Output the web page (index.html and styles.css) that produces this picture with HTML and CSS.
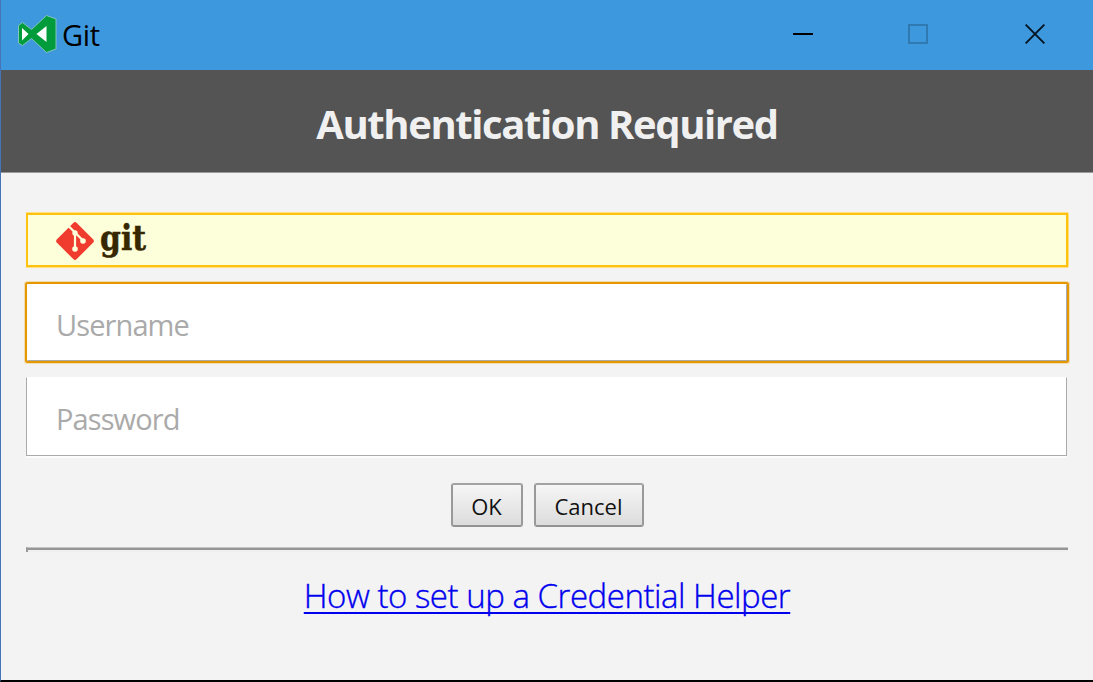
FILE: index.html
```html
<!DOCTYPE html>
<html lang="en">
<head>
<meta charset="utf-8">
<title>Git</title>
<link rel="stylesheet" href="styles.css">
</head>
<body>
<div class="window">
  <header class="titlebar">
    <svg class="app-icon" viewBox="0 0 40 40">
      <path d="M1.500 10.500L5.500 7.500L14.500 14.500L29.500 .5L39 4V34L29.500 37.500L14.500 23.500L5.500 30.500L1.500 28Z" fill="#009c3b" stroke="#82c3bd" stroke-width="1"/>
      <path d="M5 13V25.500L11.500 19ZM19.500 19L29.500 11V27Z" fill="#fff"/>
    </svg>
    <span class="app-name">Git</span>
    <div class="controls">
      <svg class="control" viewBox="0 0 20 20"><path d="M0 10H20" stroke="#000" stroke-width="2"/></svg>
      <svg class="control" viewBox="0 0 20 20"><rect x="1" y="1" width="18" height="18" fill="none" stroke="#317ab1" stroke-width="2"/></svg>
      <svg class="control close" viewBox="0 0 20 20"><path d="M.6 .6L19.400 19.400M19.400 .6L.6 19.400" stroke="#061320" stroke-width="1.900"/></svg>
    </div>
  </header>
  <div class="banner"><h1 class="heading">Authentication Required</h1></div>
  <main class="content">
    <div class="brand">
      <svg class="brand-mark" viewBox="0 0 38 38">
        <rect x="5" y="5" width="28" height="28" rx="2.500" transform="rotate(45 19 19)" fill="#f03c2e"/>
        <g fill="none" stroke="#fdffda" stroke-width="2.200"><path d="M12 3.500L19 10.500L27 18.500M19 10.500V27"/></g>
        <g fill="#fdffda"><circle cx="19" cy="11" r="2.700"/><circle cx="27" cy="19" r="2.800"/><circle cx="19" cy="27" r="2.800"/></g>
      </svg>
      <span class="brand-name">git</span>
    </div>
    <input class="field focused" type="text" placeholder="Username">
    <input class="field" type="password" placeholder="Password">
    <div class="actions">
      <button class="button ok" type="button">OK</button>
      <button class="button cancel" type="button">Cancel</button>
    </div>
    <div class="divider"></div>
    <a class="help" href="#">How to set up a Credential Helper</a>
  </main>
</div>
</body>
</html>
```
FILE: styles.css
```css
* { box-sizing: border-box; }
body { margin: 0; font-family: "Open Sans", "Noto Sans", sans-serif; }
.window {
  width: 1093px; height: 682px; overflow: hidden;
  display: flex; flex-direction: column;
  background: #f3f3f3;
  border-left: 1px solid #4674b8; border-bottom: 2px solid #000;
}
.titlebar { height: 70px; flex: none; display: flex; align-items: flex-start; background: #3e98de; padding-left: 16px; }
.app-icon { width: 40px; height: 40px; margin-top: 15px; }
.app-name { font-size: 29px; line-height: 40px; margin: 15px 0 0 5px; color: #000; letter-spacing: -.3px; }
.controls { display: flex; gap: 95px; margin: 24px 48px 0 auto; }
.control { width: 20px; height: 20px; display: block; }
.close { margin-left: 2px; }
.banner { height: 103px; flex: none; background: #545454; border-bottom: 1px solid #999; text-align: center; }
.heading { margin: 0; padding-top: 27px; font-size: 40px; line-height: 54px; font-weight: 700; letter-spacing: -1.4px; color: #f0f0f0; white-space: nowrap; }
.content { flex: 1; display: flex; flex-direction: column; align-items: flex-start; padding: 40px 25px 0; }
.brand {
  width: 1042px; height: 54px; flex: none; display: flex; align-items: flex-start;
  border: 2px solid #ffc20f; background: #fdffda; padding: 7px 0 0 28px;
  box-shadow: 0 -1px #ffdf80, 0 1px #ffdf80, 1px 0 #ffdf80;
}
.brand-mark { width: 38px; height: 38px; }
.brand-name {
  font-family: "DejaVu Serif", serif; font-weight: 700; font-size: 36px; line-height: 40px;
  margin: -5px 0 0 6px; color: #362701; transform: scaleX(.83); transform-origin: left;
  -webkit-text-stroke: .5px #362701;
}
.field {
  width: 1041px; height: 79px; flex: none; margin: 0; padding: 4px 28px 0 29px;
  font-family: inherit; font-size: 29px; letter-spacing: -.9px; color: #222; background: #fff;
  border: 1px solid #aaa; border-top-color: #fff; border-radius: 0; outline: none;
  box-shadow: 0 2px #fcfcfc;
}
.field.focused {
  width: 1040px; height: 77px; margin: 17px 0 16px 1px; padding: 3px 28px 0;
  border-left-color: #fff; box-shadow: 0 0 0 2px #e59700, 0 0 0 3px #f3dcae; border-radius: 1px;
}
.field::placeholder { color: #aaa; opacity: 1; }
.actions { display: flex; gap: 11px; margin-top: 27px; align-self: center; }
.button {
  height: 44px; padding: 2px 0 0; border: 2px solid #999; border-color: #a3a3a3 #999 #929292; border-radius: 3px;
  background: linear-gradient(#f6f6f6, #dcdcdc); font-family: inherit; font-size: 22px; color: #111;
}
.ok { width: 72px; }
.cancel { width: 110px; }
.divider { width: 1042px; height: 5px; flex: none; margin-top: 20px; border-top: 1px solid #c4c4c4; border-left: 2px solid #999; background: linear-gradient(#959595 0 2px, #f0f0f0 2px); }
.help {
  align-self: center; margin-top: 21px; font-size: 33px; line-height: 46px; font-weight: 300; letter-spacing: -.47px;
  color: #00e; white-space: nowrap; text-underline-offset: 4px; text-decoration-thickness: 2px; text-decoration-skip-ink: none;
  -webkit-text-stroke: .35px #00e;
}
```
